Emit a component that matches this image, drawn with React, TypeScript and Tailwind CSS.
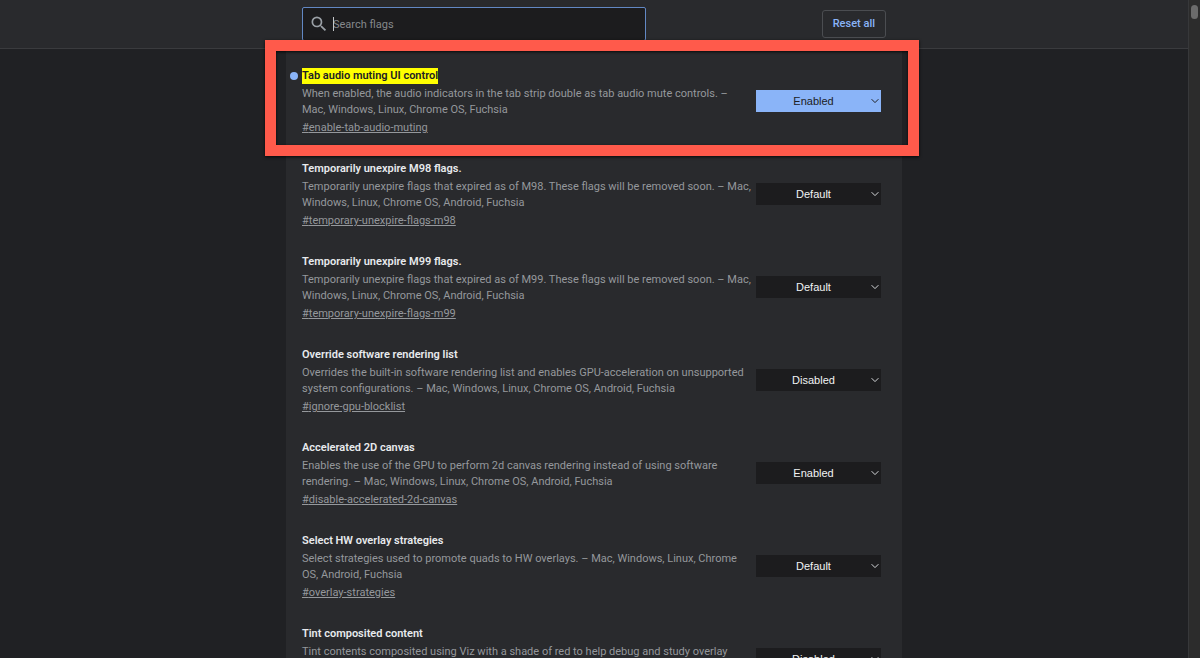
type Flag = {
  id: string;
  title: string;
  description: string;
  value: string;
  highlighted?: boolean;
};

const flags: Flag[] = [
  {
    id: "enable-tab-audio-muting",
    title: "Tab audio muting UI control",
    description:
      "When enabled, the audio indicators in the tab strip double as tab audio mute controls. – Mac, Windows, Linux, Chrome OS, Fuchsia",
    value: "Enabled",
    highlighted: true,
  },
  {
    id: "temporary-unexpire-flags-m98",
    title: "Temporarily unexpire M98 flags.",
    description:
      "Temporarily unexpire flags that expired as of M98. These flags will be removed soon. – Mac, Windows, Linux, Chrome OS, Android, Fuchsia",
    value: "Default",
  },
  {
    id: "temporary-unexpire-flags-m99",
    title: "Temporarily unexpire M99 flags.",
    description:
      "Temporarily unexpire flags that expired as of M99. These flags will be removed soon. – Mac, Windows, Linux, Chrome OS, Android, Fuchsia",
    value: "Default",
  },
  {
    id: "ignore-gpu-blocklist",
    title: "Override software rendering list",
    description:
      "Overrides the built-in software rendering list and enables GPU-acceleration on unsupported system configurations. – Mac, Windows, Linux, Chrome OS, Android, Fuchsia",
    value: "Disabled",
  },
  {
    id: "disable-accelerated-2d-canvas",
    title: "Accelerated 2D canvas",
    description:
      "Enables the use of the GPU to perform 2d canvas rendering instead of using software rendering. – Mac, Windows, Linux, Chrome OS, Android, Fuchsia",
    value: "Enabled",
  },
  {
    id: "overlay-strategies",
    title: "Select HW overlay strategies",
    description:
      "Select strategies used to promote quads to HW overlays. – Mac, Windows, Linux, Chrome OS, Android, Fuchsia",
    value: "Default",
  },
  {
    id: "tint-composited-content",
    title: "Tint composited content",
    description: "Tint contents composited using Viz with a shade of red to help debug and study overlay",
    value: "Disabled",
  },
];

function FlagRow({ flag }: { flag: Flag }) {
  const on = flag.highlighted;
  return (
    <li className="relative flex items-start justify-between gap-1 pr-[21px] pb-[25px] pl-4">
      {on && (
        <>
          <span className="absolute top-[4px] left-1 size-2 rounded-full bg-[#8ab4f8]" />
          <span className="pointer-events-none absolute -top-7 -right-[17px] bottom-[5px] -left-[21px] z-20 border-[11px] border-[#ff5a4b] shadow-[0_1px_3px_rgba(0,0,0,0.8),inset_0_1px_3px_rgba(0,0,0,0.8)]" />
        </>
      )}
      <div className="min-w-0 flex-1">
        <h2 className="text-[11px] leading-4 font-semibold text-[#e8eaed]">
          <label htmlFor={flag.id}>
            {on ? <mark className="inline-block bg-[#ffff00] text-[#202124]">{flag.title}</mark> : flag.title}
          </label>
        </h2>
        <p className="mt-0.5 text-[11px] leading-4 text-[#95989c]">{flag.description}</p>
        <a href={`#${flag.id}`} className="mt-0.5 block w-fit text-[11px] leading-4 text-[#95989c] underline">
          #{flag.id}
        </a>
      </div>
      <div className="relative mt-[22px] w-[125px] shrink-0">
        <select
          id={flag.id}
          defaultValue={flag.value}
          className={
            on
              ? "block h-[22px] w-full appearance-none bg-[#8ab4f8] pr-[10px] font-['Liberation_Sans',sans-serif] text-[11px] text-[#202124] [text-align-last:center]"
              : "block h-[22px] w-full appearance-none bg-[#1c1c1e] pr-[10px] font-['Liberation_Sans',sans-serif] text-[11px] text-[#f1f3f4] [text-align-last:center]"
          }
        >
          <option>Default</option>
          <option>Enabled</option>
          <option>Disabled</option>
        </select>
        <svg
          viewBox="0 0 8 6"
          className={
            on
              ? "pointer-events-none absolute top-2 right-[2px] h-[6px] w-2 text-[#202124]"
              : "pointer-events-none absolute top-2 right-[2px] h-[6px] w-2 text-[#d5d7da]"
          }
          fill="none"
          stroke="currentColor"
          strokeWidth="1"
        >
          <path d="M0.6 1.2 L4 4.6 L7.4 1.2" />
        </svg>
      </div>
    </li>
  );
}

export default function App() {
  return (
    <div className="flex h-screen overflow-hidden bg-[#202124] font-[Roboto,sans-serif]">
      <div className="min-w-0 flex-1">
        <header className="border-b border-[#3a3b3e] bg-[#292a2d]">
          <div className="mx-auto flex h-12 max-w-[616px] items-center justify-between px-4">
            <div className="relative w-[344px]">
              <svg
                viewBox="0 0 24 24"
                fill="#9aa0a6"
                className="pointer-events-none absolute top-[7px] left-[7px] size-5"
              >
                <path d="M15.5 14h-.79l-.28-.27A6.471 6.471 0 0 0 16 9.5 6.5 6.5 0 1 0 9.5 16c1.61 0 3.09-.59 4.23-1.57l.27.28v.79l5 4.99L20.49 19l-4.99-5zm-6 0C7.01 14 5 11.99 5 9.5S7.01 5 9.5 5 14 7.01 14 9.5 11.99 14 9.5 14z" />
              </svg>
              <input
                type="text"
                aria-label="Search flags"
                placeholder="Search flags"
                className="block h-[34px] w-full rounded-[2px] border border-[#6288c4] bg-[#1c1c1e] pl-[30px] text-[11px] text-[#e8eaed] outline-none placeholder:text-[#85888c]"
              />
              <span className="absolute top-[10px] left-[31px] h-[14px] w-px bg-[#c4c6c9]" />
            </div>
            <button
              type="button"
              className="h-7 rounded-[3px] border border-[#4b4d51] px-[10px] pt-px text-[11px] font-medium text-[#8ab4f8]"
            >
              Reset all
            </button>
          </div>
        </header>
        <main className="mx-auto max-w-[616px] bg-[#292a2d] pt-[19px]">
          <ul>
            {flags.map((flag) => (
              <FlagRow key={flag.id} flag={flag} />
            ))}
          </ul>
        </main>
      </div>
      <div className="w-3 border-l border-[#37383a] bg-[#2c2c2c] pt-[5px] pl-[2px]">
        <div className="h-[14px] w-[7px] rounded-full bg-[#6b6b6b]" />
      </div>
    </div>
  );
}
